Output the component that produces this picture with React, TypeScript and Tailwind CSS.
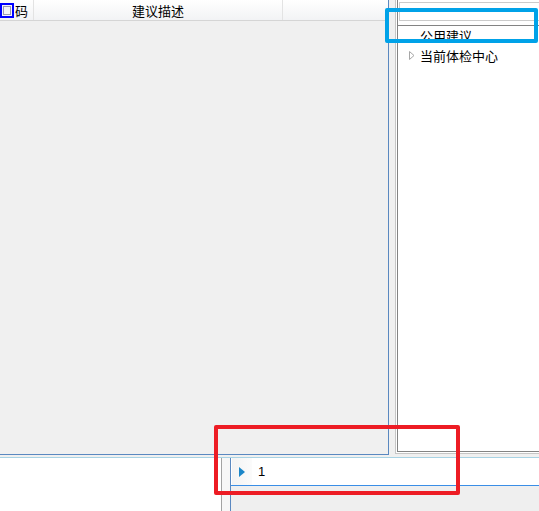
import React from 'react';

const cjk = "font-['Noto_Sans_CJK_SC','Noto_Sans',sans-serif]";

const App: React.FC = () => {
  return (
    <div className={`relative w-[539px] h-[511px] overflow-hidden bg-[#f0f0f0] text-[13px] text-black ${cjk}`}>
      {/* top area */}
      <div className="flex h-[457px]">
        {/* left grid */}
        <div className="flex flex-col w-[389px] h-[455px] border-r border-b border-[#5a88c0]">
          <div className="flex h-[21px] border-b border-[#d5d5d5] bg-gradient-to-b from-[#ffffff] to-[#f2f3f5]">
            <div className="flex items-center w-[34px] border-r border-[#e3e3e3]">
              <div className="w-[14px] h-[15px] border-2 border-[#0000ff] bg-[#f4f4f8] flex items-center justify-center">
                <div className="w-[8px] h-[9px] border border-[#9a9ab0]" />
              </div>
              <span className="ml-px leading-none">码</span>
            </div>
            <div className="flex items-center justify-center w-[249px] border-r border-[#e3e3e3] leading-none">建议描述</div>
            <div className="flex-1" />
          </div>
          <div className="flex-1 bg-[#f0f0f0]" />
        </div>

        {/* right tree panel */}
        <div className="ml-[6px] flex-1 h-[454px] border-l border-b border-[#c6c6c6] bg-white pl-px pb-px">
          <div className="flex flex-col h-full border-l border-b border-[#838383]">
            <div className="h-[25px] pt-[2px] pl-px">
              <div className="h-[19px] border-t border-b border-l border-[#cbcbcb] bg-white" />
            </div>
            <div className="flex-1 border-t border-[#838383] bg-white">
              <div className="flex items-center h-[18px] pl-[22px] leading-none">公用建议</div>
              <div className="flex items-center h-[22px] pl-[11px] leading-none">
                <svg width="6" height="9" viewBox="0 0 6 9" className="mr-[5px]">
                  <path d="M0.5 0.5 L5 4.5 L0.5 8.5 Z" fill="none" stroke="#a6a6a6" strokeWidth="1" />
                </svg>
                当前体检中心
              </div>
            </div>
          </div>
        </div>
      </div>

      {/* light blue separator */}
      <div className="h-px bg-[#a8d3e4]" />

      {/* bottom area */}
      <div className="flex h-[53px]">
        <div className="w-[221px] bg-white" />
        <div className="w-[9px] border-l border-[#a3a3a3] bg-[#f7f7f7]" />
        <div className="flex-1 flex flex-col border-l border-[#5a88c0]">
          <div className="flex h-[28px] border-b border-[#3a8ee6] bg-white">
            <div className="flex items-center justify-center w-[20px] ml-px bg-gradient-to-r from-[#f3f3f3] to-[#fbfbfb]">
              <svg width="6" height="10" viewBox="0 0 6 10">
                <path d="M0 0 L6 5 L0 10 Z" fill="#1c86c8" />
              </svg>
            </div>
            <div className="flex items-center pl-[6px] font-['Liberation_Sans',sans-serif] text-[13px]">1</div>
          </div>
          <div className="flex-1 bg-[#efefef]" />
        </div>
      </div>

      {/* annotation overlays */}
      <div className="absolute left-[385px] top-[8px] w-[153px] h-[35px] border-4 border-[#00a2e8] rounded-[2px]" />
      <div className="absolute left-[214px] top-[425px] w-[246px] h-[70px] border-4 border-[#ed1c24] rounded-[2px]" />
    </div>
  );
};

export default App;
